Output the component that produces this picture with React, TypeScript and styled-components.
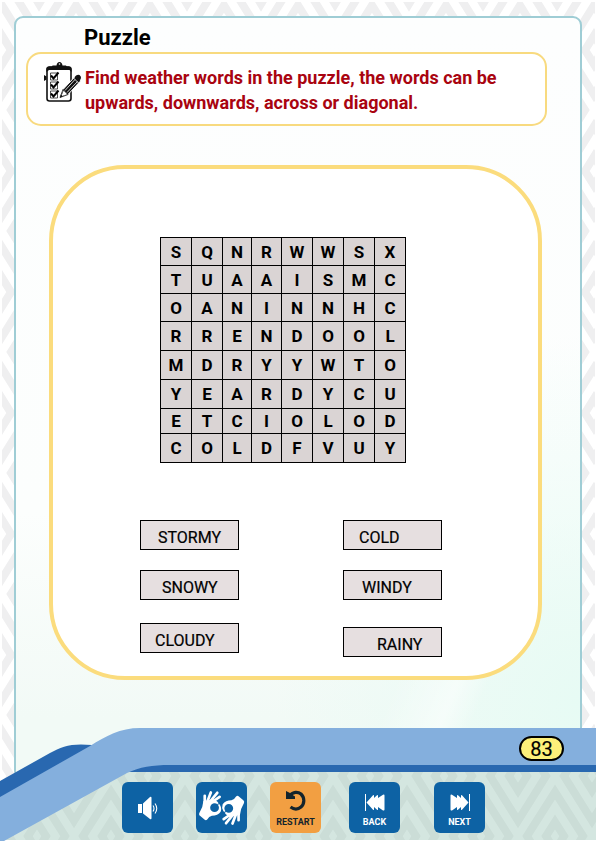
import React from "react";
import styled, { createGlobalStyle } from "styled-components";

const GlobalStyle = createGlobalStyle`
  *, *::before, *::after { box-sizing: border-box; }
  body {
    margin: 0;
    background: #fff;
    color: #000;
    font-family: Roboto, "Liberation Sans", sans-serif;
  }
`;

const Page = styled.div`
  position: relative;
  display: flex;
  flex-direction: column;
  min-height: 100vh;
  overflow: hidden;
`;

const Backdrop = styled.svg`
  position: absolute;
  inset: 2px 1px 2px 2px;
  width: calc(100% - 3px);
  height: calc(100% - 4px);
`;

const Sheet = styled.main`
  position: relative;
  flex: 1;
  margin: 16px 14px -52px;
  padding: 7px 33px 98px 10px;
  border: 2px solid #9fcdd5;
  border-radius: 9px;
  background:
    linear-gradient(112deg, transparent 64%, rgba(255, 255, 255, 0.5) 74%, transparent 79%) bottom / 100% 140px no-repeat,
    radial-gradient(ellipse at 100% 90%, #e7fbf4 0%, rgba(231, 251, 244, 0) 38%),
    linear-gradient(180deg, #fdfefe 0%, #fcfefd 65%, #f2faf6 92%);
`;

const Title = styled.h1`
  margin: 0 0 1px 58px;
  font-size: 22px;
  line-height: 26px;
  font-weight: 700;
`;

const Instructions = styled.section`
  display: flex;
  gap: 4px;
  min-height: 74px;
  padding: 7px 16px 7px 16px;
  border: 2px solid #f8da7f;
  border-radius: 15px;
  background: #fff;
`;

const ClipboardDrawing = styled.svg`
  flex: none;
`;

const InstructionText = styled.p`
  margin: 4px 0 0;
  color: #a90410;
  font-size: 18px;
  line-height: 25px;
  font-weight: 700;
`;

const Board = styled.section`
  display: flex;
  flex-direction: column;
  margin: 39px 5px 0 23px;
  padding: 68px 96px 19px 87px;
  border: 4px solid #fbdc7d;
  border-radius: 76px;
  background: #fff;
`;

const LetterTable = styled.table`
  align-self: center;
  table-layout: fixed;
  width: 246px;
  margin-right: 16px;
  border-collapse: collapse;
  background: #dad4d4;
`;

const LetterRow = styled.tr<{ $height: number }>`
  height: ${(p) => p.$height}px;
`;

const Letter = styled.td`
  padding: 0;
  border: 1px solid #000;
  font-size: 17px;
  line-height: 20px;
  font-weight: 700;
  text-align: center;
`;

const Words = styled.ul`
  display: grid;
  grid-template-columns: 99px 99px;
  grid-template-rows: 30px 33px 34px;
  row-gap: 20px;
  justify-content: space-between;
  margin: 57px 0 0;
  padding: 0;
  list-style: none;
`;

const Word = styled.li<{ $indent: number; $low?: boolean }>`
  align-self: ${(p) => (p.$low ? "end" : "start")};
  height: 30px;
  padding: 7px 0 0 ${(p) => p.$indent}px;
  border: 1px solid #000;
  background: #e6dfe0;
  font-size: 16px;
  line-height: 20px;
  -webkit-text-stroke: 0.2px #000;
`;

const Footer = styled.footer`
  position: relative;
  display: grid;
  grid-template-rows: 54px 60px;
`;

const Swoosh = styled.svg`
  position: absolute;
  inset: 0;
  width: 100%;
  height: 100%;
`;

const PageNumber = styled.span`
  position: relative;
  justify-self: end;
  width: 45px;
  height: 25px;
  margin: 8px 32px 0 0;
  border: 2px solid #000;
  border-radius: 13px;
  background: #fdf07a;
  font-size: 20px;
  line-height: 22px;
  text-align: center;
  -webkit-text-stroke: 0.2px #000;
`;

const Controls = styled.nav`
  position: relative;
  display: grid;
  grid-template-columns: 74px 74px 79px 85px 51px;
  padding-left: 122px;
`;

const Control = styled.button<{ $accent?: boolean; $labelled?: boolean }>`
  display: flex;
  flex-direction: column;
  align-items: center;
  justify-content: ${(p) => (p.$labelled ? "flex-end" : "center")};
  gap: 6px;
  width: 51px;
  height: 51px;
  padding: 0 0 ${(p) => (p.$labelled ? 6 : 0)}px;
  border: 0;
  border-radius: 6px;
  background: ${(p) => (p.$accent ? "#f29f42" : "#0d62a4")};
  color: ${(p) => (p.$accent ? "#14242c" : "#fff")};
  font: 700 9px/10px Roboto, sans-serif;
  cursor: pointer;
`;

const rows = ["SQNRWWSX", "TUAAISMC", "OANINNHC", "RRENDOOL", "MDRYYWTO", "YEARDYCU", "ETCIOLOD", "COLDFVUY"];
const rowHeights = [28, 28, 28, 29, 29, 29, 25, 29];
const columnWidths = [31, 31, 29, 30, 31, 31, 31, 31];

const words = [
  { text: "STORMY", indent: 17 },
  { text: "COLD", indent: 15 },
  { text: "SNOWY", indent: 21 },
  { text: "WINDY", indent: 18 },
  { text: "CLOUDY", indent: 14 },
  { text: "RAINY", indent: 33, low: true },
];

function DiamondPattern({ id, color }: { id: string; color: string }) {
  return (
    <pattern id={id} width="74" height="121" patternUnits="userSpaceOnUse" y="48">
      <g fill="none" stroke={color} strokeWidth="8">
        {[0, 74].map((cx) =>
          [0, 121].map((cy) =>
            [9, 28].map((r) => (
              <path
                key={`${cx}-${cy}-${r}`}
                d={`M${cx - r} ${cy}L${cx} ${cy - r * 1.6}L${cx + r} ${cy}L${cx} ${cy + r * 1.6}Z`}
              />
            ))
          )
        )}
        <path d="M37 46L46 60L37 75L28 60ZM37 16L65 60L37 105L9 60Z" />
      </g>
    </pattern>
  );
}

function ClipboardIcon() {
  return (
    <ClipboardDrawing width="37" height="42" viewBox="0 0 37 42" aria-hidden="true">
      <rect x="3" y="6" width="24" height="34" rx="2.5" fill="#fff" stroke="#111" strokeWidth="1.6" />
      <path d="M2.5 8q0-2.500 3-2.500h19q3 0 3 3v2.500l-2-2H5l-2.500 2z" fill="#111" />
      <path d="M7 7.500l1.500-3h4q.5-3.500 3-3.500t3 3.500h3.500l2 3z" fill="#111" />
      <circle cx="15.500" cy="3" r="0.8" fill="#fff" />
      <path d="M0 14l2.500 1.500v3L0 20z" fill="#111" />
      <path d="M6.500 12h7v7h-7zM6.500 21h7v7h-7zM6.500 30h7v7h-7z" fill="#fff" stroke="#222" strokeWidth="0.8" />
      <path
        d="M7 14.500l2.500 3 5-6M7 23.500l2.500 3 5-6M7 32.500l2.500 3 5-6"
        fill="none"
        stroke="#000"
        strokeWidth="2"
      />
      <path d="M16 36.500l3-8L31.500 15l5 5L24 33.500z" fill="#111" stroke="#fff" strokeWidth="1" />
      <path d="M17.300 35.200l2.500-6 3.700 4z" fill="#fff" />
      <path d="M16 36.500l3-8 5 5z" fill="none" stroke="#111" strokeWidth="0.8" />
      <path d="M16 36.500l1-3 1.700 2z" fill="#111" />
      <path d="M21 29.500L31 18.500M23 31.500L33.500 20.500M29 16.500l5.500 5.500" stroke="#fff" strokeWidth="0.8" />
      <path d="M31 15.500q2-2.500 4.500-1.500 1.500 1 1.500 3l-1.500 3.500z" fill="#111" />
    </ClipboardDrawing>
  );
}

function SpeakerIcon() {
  return (
    <svg width="20" height="24" viewBox="0 0 20 24" aria-hidden="true">
      <path d="M0 8h4v9H0zM5 7.500L12 1q1.500-1 1.500 1v20q0 2-1.500 1L5 17.500z" fill="currentColor" />
      <path d="M15 9.500q2 3 0 6M17 7.500q3.500 5 0 10" fill="none" stroke="currentColor" strokeWidth="1.100" />
    </svg>
  );
}

function Hand() {
  return (
    <>
      <path
        fillRule="evenodd"
        d="M13 32Q12 50 1 68Q-1 73 3 76L17 88Q21 91 25 86Q29 78 38 76Q56 76 64 64Q68 54 62 44L54 34Q44 26 34 30ZM46 39A13 13 0 1 0 46 65A13 13 0 1 0 46 39Z"
        fill="currentColor"
      />
      <path
        d="M17 42L17 17M24 36L35 7M31 36L54 8M38 36L61 20"
        fill="none"
        stroke="currentColor"
        strokeWidth="8"
        strokeLinecap="round"
      />
      <path d="M54 43L66 36" stroke="#0d62a4" strokeWidth="3" />
    </>
  );
}

function HandsIcon() {
  return (
    <svg width="46" height="36" viewBox="0 0 136 106" aria-hidden="true">
      <Hand />
      <g transform="rotate(180 67 53)">
        <Hand />
      </g>
    </svg>
  );
}

function RestartIcon() {
  return (
    <svg width="20" height="21" viewBox="0 0 20 21" aria-hidden="true">
      <path
        d="M4 5.500C7 1.500 12 1.500 15 4c4 4 3.500 10 0 13-3 2.500-7 2.500-10.500 0"
        fill="none"
        stroke="currentColor"
        strokeWidth="3.200"
      />
      <path d="M0 1l2.500 1.200L9 6.500V9H0z" fill="currentColor" />
    </svg>
  );
}

function SkipIcon({ forward }: { forward?: boolean }) {
  return (
    <svg width="20" height="17" viewBox="0 0 20 17" aria-hidden="true">
      <g transform={forward ? "translate(20 0) scale(-1 1)" : undefined} fill="currentColor">
        <path d="M0 0h1v17H0z" />
        <path d="M1.500 8.500L8 1.200q1-.7 1 .6V4l3-2.800q1-.7 1 .6V4l5-3.200q1.500-.7 1.500.8v14q0 1.500-1.500.8L13 13v2.200q0 1.300-1 .6L9 13v2.200q0 1.300-1 .6z" />
      </g>
    </svg>
  );
}

export default function App() {
  return (
    <Page>
      <GlobalStyle />
      <Backdrop aria-hidden="true">
        <defs>
          <DiamondPattern id="page-diamonds" color="#efeff0" />
        </defs>
        <rect width="100%" height="100%" fill="url(#page-diamonds)" />
      </Backdrop>
      <Sheet>
        <Title>Puzzle</Title>
        <Instructions>
          <ClipboardIcon />
          <InstructionText>
            Find weather words in the puzzle, the words can be upwards, downwards, across or diagonal.
          </InstructionText>
        </Instructions>
        <Board>
          <LetterTable aria-label="Word search">
            <colgroup>
              {columnWidths.map((width, i) => (
                <col key={i} width={width} />
              ))}
            </colgroup>
            <tbody>
              {rows.map((row, i) => (
                <LetterRow key={row} $height={rowHeights[i]}>
                  {row.split("").map((letter, j) => (
                    <Letter key={j}>{letter}</Letter>
                  ))}
                </LetterRow>
              ))}
            </tbody>
          </LetterTable>
          <Words>
            {words.map((word) => (
              <Word key={word.text} $indent={word.indent} $low={word.low}>
                {word.text}
              </Word>
            ))}
          </Words>
        </Board>
      </Sheet>
      <Footer>
        <Swoosh aria-hidden="true">
          <defs>
            <DiamondPattern id="footer-diamonds" color="#cbddd7" />
          </defs>
          <path d="M4 112L128 43H4000V112Z" fill="#d4e6e0" />
          <path d="M4 112L128 43H4000V112Z" fill="url(#footer-diamonds)" />
          <path d="M0 53L50 25C62 18 72 15 92 17L100 30L0 85Z" fill="#2968b0" />
          <path d="M126 44L150 34H4000V44Z" fill="#2968b0" />
          <path d="M0 69L90 18C106 8 120 0 140 0H4000V37H170C152 37 140 39 127 45L4 113H0Z" fill="#84afdd" />
        </Swoosh>
        <PageNumber>83</PageNumber>
        <Controls aria-label="Page controls">
          <Control type="button" aria-label="Play sound">
            <SpeakerIcon />
          </Control>
          <Control type="button" aria-label="Sign language">
            <HandsIcon />
          </Control>
          <Control type="button" $accent $labelled>
            <RestartIcon />
            RESTART
          </Control>
          <Control type="button" $labelled>
            <SkipIcon />
            BACK
          </Control>
          <Control type="button" $labelled>
            <SkipIcon forward />
            NEXT
          </Control>
        </Controls>
      </Footer>
    </Page>
  );
}
